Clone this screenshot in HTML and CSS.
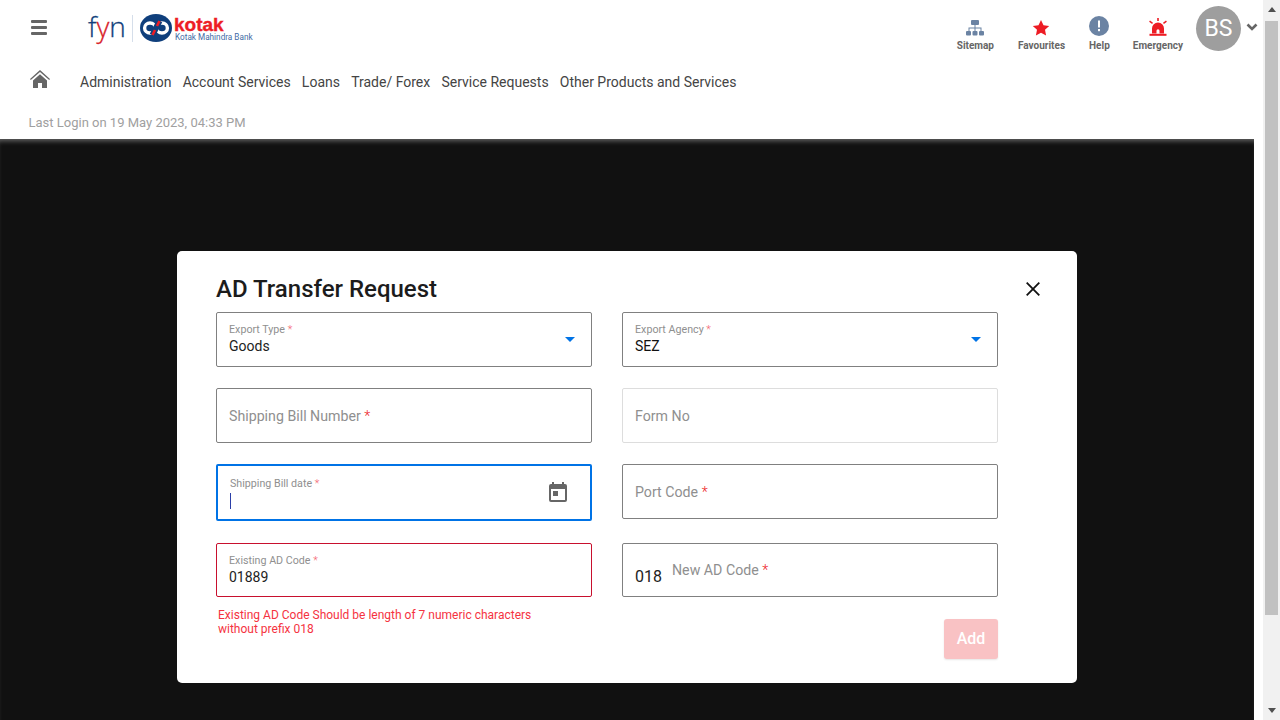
FILE: index.html
```html
<!DOCTYPE html>
<html lang="en">
<head>
  <meta charset="UTF-8" />
  <title>AD Transfer Request</title>
  <link rel="stylesheet" href="styles.css">
</head>
<body>
  <div class="page">
    <header class="topbar">
      <div class="top-row">
        <button class="menu-btn" aria-label="Menu">
          <span></span><span></span><span></span>
        </button>
        <div class="logo">
          <span class="fyn">f<span class="fyn-y">y</span>n</span>
          <span class="logo-rule"></span>
          <svg class="kotak-mark" width="32" height="28" viewBox="0 0 32 28">
            <ellipse cx="16" cy="14" rx="16" ry="14" fill="#0f3f7c"/>
            <ellipse cx="10" cy="14" rx="5.400" ry="5" fill="none" stroke="#fff" stroke-width="3.400"/>
            <ellipse cx="22" cy="14" rx="5.400" ry="5" fill="none" stroke="#fff" stroke-width="3.400"/>
            <path d="M12.500 21L19.500 7" stroke="#0f3f7c" stroke-width="6"/>
            <path d="M12.500 21L15 16M17 12L19.500 7" stroke="#ed1c24" stroke-width="2.600"/>
          </svg>
          <div class="kotak-text">
            <span class="kotak-name">kotak</span>
            <span class="kotak-sub">Kotak Mahindra Bank</span>
          </div>
        </div>
        <div class="quick-links">
          <a class="quick-link link-sitemap">
            <svg width="18" height="16" viewBox="0 0 18 16" fill="#6b83a3">
              <rect x="5" y="0" width="8" height="5" rx="1"/>
              <rect x="0" y="11" width="5" height="4.500" rx="1"/>
              <rect x="6.500" y="11" width="5" height="4.500" rx="1"/>
              <rect x="13" y="11" width="5" height="4.500" rx="1"/>
              <path d="M8.500 5h1v2.500h6v3.500h-1V8.500h-5V11h-1V8.500h-5V11h-1V7.500h6z"/>
            </svg>
            <span>Sitemap</span>
          </a>
          <a class="quick-link link-fav">
            <svg width="18" height="16" viewBox="0 0 18 16" fill="#ed1c24">
              <path d="M9 0l2.500 5.200 5.700.7-4.200 3.900 1.100 5.700L9 12.700l-5.100 2.800L5 9.800.8 5.900l5.700-.7z"/>
            </svg>
            <span>Favourites</span>
          </a>
          <a class="quick-link link-help">
            <svg width="20" height="20" viewBox="0 0 20 20">
              <circle cx="10" cy="10" r="10" fill="#6b83a3"/>
              <rect x="9" y="4.500" width="2" height="7" fill="#fff"/>
              <rect x="9" y="13" width="2" height="2.200" fill="#fff"/>
            </svg>
            <span>Help</span>
          </a>
          <a class="quick-link link-alarm">
            <svg width="18" height="18" viewBox="0 0 18 18" fill="#ed1c24">
              <path d="M3 15.500V10.500a6 6 0 0 1 12 0v5h-4.500v-2.700a1.500 1.500 0 0 0-3 0v2.700z"/>
              <rect x="0.500" y="15.800" width="17" height="2"/>
              <rect x="8.200" y="0" width="1.600" height="3"/>
              <path d="M1 2.500l3 2.200-.9 1.200-3-2.200zM17 2.500l-3 2.200.9 1.200 3-2.200z"/>
            </svg>
            <span>Emergency</span>
          </a>
        </div>
        <div class="avatar">BS</div>
        <svg class="avatar-caret" width="12" height="8" viewBox="0 0 12 8">
          <path d="M1.500 1.500L6 6l4.500-4.500" fill="none" stroke="#666" stroke-width="2.600"/>
        </svg>
      </div>
      <nav class="nav-row">
        <svg class="home-icon" width="20" height="18" viewBox="0 0 20 18" fill="#666">
          <path d="M10 0L0 9l.8 1L10 2l9.200 8 .8-1z"/>
          <path d="M3 10.500L10 4.300l7 6.200V18h-5v-5H8v5H3z"/>
        </svg>
        <ul class="nav-list">
          <li>Administration</li>
          <li>Account Services</li>
          <li>Loans</li>
          <li>Trade/ Forex</li>
          <li>Service Requests</li>
          <li>Other Products and Services</li>
        </ul>
      </nav>
      <p class="last-login">Last Login on 19 May 2023, 04:33 PM</p>
    </header>

    <div class="overlay">
      <section class="modal">
        <div class="modal-head">
          <h2>AD Transfer Request</h2>
          <svg class="close-icon" width="14" height="14" viewBox="0 0 14 14">
            <path d="M.700.700l12.600 12.600M13.300.700L.700 13.300" stroke="#111" stroke-width="1.800" fill="none"/>
          </svg>
        </div>
        <form class="form-grid">
          <div class="field field-select">
            <label class="small-label">Export Type <em>*</em></label>
            <div class="value">Goods</div>
            <span class="select-arrow"></span>
          </div>
          <div class="field field-select">
            <label class="small-label">Export Agency <em>*</em></label>
            <div class="value value-dark">SEZ</div>
            <span class="select-arrow"></span>
          </div>

          <div class="field">
            <label class="big-label">Shipping Bill Number <em>*</em></label>
          </div>
          <div class="field field-disabled">
            <label class="big-label">Form No</label>
          </div>

          <div class="field field-focus">
            <label class="small-label">Shipping Bill date <em>*</em></label>
            <span class="caret"></span>
            <svg class="date-icon" width="18" height="20" viewBox="0 0 18 20" fill="#666">
              <path d="M3 0h2v2h8V0h2v2h1a2 2 0 0 1 2 2v14a2 2 0 0 1-2 2H2a2 2 0 0 1-2-2V4a2 2 0 0 1 2-2h1zM2 7v11h14V7z"/>
              <rect x="4" y="9" width="5" height="5"/>
            </svg>
          </div>
          <div class="field">
            <label class="big-label">Port Code <em>*</em></label>
          </div>

          <div class="code-cell">
            <div class="field field-error">
              <label class="small-label">Existing AD Code <em>*</em></label>
              <div class="value">01889</div>
            </div>
            <p class="error-text">Existing AD Code Should be length of 7 numeric characters<br>without prefix 018</p>
          </div>
          <div class="code-cell new-code-cell">
            <div class="field field-prefix">
              <span class="prefix">018</span>
              <label class="big-label">New AD Code <em>*</em></label>
            </div>
            <button type="button" class="add-btn">Add</button>
          </div>
        </form>
      </section>
    </div>
  </div>

  <div class="scrollbar">
    <span class="scroll-up"></span>
    <span class="scroll-thumb"></span>
    <span class="scroll-down"></span>
  </div>
</body>
</html>
```

FILE: styles.css
```css
:root {
  --border: #808080;
  --label: #8f8f8f;
  --red: #ed1c24;
  --blue: #0073e6;
  --text: #222;
}

body {
  margin: 0;
  display: flex;
  height: 720px;
  overflow: hidden;
  background: #fff;
  color: var(--text);
  font-family: Roboto, "Liberation Sans", sans-serif;
}

.page {
  flex: 1;
  min-width: 0;
  display: flex;
  flex-direction: column;
}

/* header */
.topbar {
  height: 139px;
  flex: none;
}

.top-row {
  display: flex;
  align-items: flex-start;
  height: 60px;
}

.menu-btn {
  display: flex;
  flex-direction: column;
  gap: 3px;
  width: 16px;
  margin: 20px 0 0 31px;
  padding: 0;
  border: 0;
  background: none;
}

.menu-btn span {
  display: block;
  height: 3px;
  border-radius: 1px;
  background: #666;
}

.logo {
  display: flex;
  align-items: center;
  margin: 13px 0 0 41px;
  height: 30px;
}

.fyn {
  width: 43px;
  margin-top: -4px;
  font-family: "Open Sans", sans-serif;
  font-size: 28px;
  font-weight: 300;
  line-height: 30px;
  color: #123f7c;
  -webkit-text-stroke: 0.3px #123f7c;
}

.fyn-y {
  color: #d8232a;
  -webkit-text-stroke: 0.3px #d8232a;
}

.logo-rule {
  width: 1px;
  height: 27px;
  margin-left: 1px;
  background: #d5deea;
}

.kotak-mark {
  margin-left: 7px;
}

.kotak-text {
  display: flex;
  flex-direction: column;
  margin: 3px 0 0 2px;
}

.kotak-name {
  font-family: "Liberation Sans", sans-serif;
  font-weight: 700;
  font-size: 19px;
  line-height: 15px;
  color: var(--red);
  -webkit-text-stroke: 0.4px var(--red);
}

.kotak-sub {
  margin-left: 1px;
  font-size: 8.200px;
  line-height: 10px;
  color: #3f6ba5;
}

.quick-links {
  display: flex;
  margin-left: auto;
}

.quick-link {
  display: flex;
  flex-direction: column;
  align-items: center;
  justify-content: flex-end;
  height: 52px;
  font-size: 10px;
  font-weight: 700;
  line-height: 12px;
  color: #666;
}

.quick-link svg {
  margin-bottom: 4px;
}

.link-sitemap { margin-right: 24px; }
.link-fav { margin-right: 24px; }
.link-help { margin-right: 23px; }
.link-alarm { margin-right: 13px; }

.avatar {
  width: 45px;
  height: 45px;
  margin-top: 6px;
  border-radius: 50%;
  background: #9e9e9e;
  color: #fff;
  font-size: 23px;
  line-height: 45px;
  text-align: center;
}

.avatar-caret {
  margin: 23px 5px 0 5px;
}

.nav-row {
  display: flex;
  align-items: center;
  height: 36px;
  margin-top: 4px;
}

.home-icon {
  margin: -6px 0 0 30px;
}

.nav-list {
  display: flex;
  gap: 11.200px;
  margin: 0 0 0 30px;
  padding: 0;
  list-style: none;
  font-size: 14px;
  color: #444;
}

.last-login {
  margin: 15px 0 0 28.500px;
  font-size: 13px;
  line-height: 16px;
  color: #a0a0a0;
}

/* modal */
.overlay {
  flex: 1;
  display: flex;
  justify-content: center;
  align-items: flex-start;
  padding-top: 112px;
  margin-right: 9px;
  background: #111;
  box-shadow: inset 0 5px 5px -3px #666;
}

.modal {
  box-sizing: border-box;
  width: 900px;
  height: 432px;
  padding: 0 37px 0 39px;
  border-radius: 5px;
  background: #fff;
}

.modal-head {
  display: flex;
  align-items: center;
  justify-content: space-between;
  box-sizing: border-box;
  height: 61px;
  padding-top: 15px;
}

.modal-head h2 {
  margin: 0;
  font-size: 24px;
  font-weight: 500;
  line-height: 46px;
  color: #1c1c1c;
}

.close-icon {
  flex: none;
}

.form-grid {
  display: grid;
  grid-template-columns: 376px 376px;
  grid-template-rows: 55px 55px 57px auto;
  column-gap: 30px;
  row-gap: 21px;
}

.field {
  position: relative;
  box-sizing: border-box;
  height: 55px;
  padding: 0 12px;
  border: 1px solid var(--border);
  border-radius: 2px;
  background: #fff;
}

.small-label {
  display: block;
  padding-top: 10px;
  font-size: 10.700px;
  line-height: 13px;
  color: var(--label);
}

.small-label em {
  color: #f4606a;
}

.big-label {
  font-size: 14.200px;
  line-height: 55px;
  color: var(--label);
}

em {
  font-style: normal;
  font-weight: 300;
  color: var(--red);
}

.value {
  font-size: 14px;
  line-height: 20px;
  color: var(--text);
}

.value-dark {
  color: #111;
}

.select-arrow {
  position: absolute;
  top: 24px;
  right: 16px;
  border-left: 5px solid transparent;
  border-right: 5px solid transparent;
  border-top: 5px solid var(--blue);
}

.field-disabled {
  border-color: #ddd;
}

.field-focus {
  height: 57px;
  border: 2px solid var(--blue);
}

.field-focus .small-label {
  padding-top: 11px;
}

.caret {
  display: block;
  width: 1px;
  height: 16px;
  margin-top: 3px;
  background: #2b3fa8;
}

.date-icon {
  position: absolute;
  top: 16px;
  right: 23px;
}

.code-cell {
  margin-top: 1px;
}

.field-error {
  height: 54px;
  border-color: #c8102e;
}

.error-text {
  margin: 11px 0 0 2px;
  font-size: 12px;
  line-height: 14px;
  color: #f5333f;
}

.field-prefix {
  display: flex;
  height: 54px;
}

.prefix {
  margin-right: 10px;
  font-size: 16px;
  line-height: 66px;
  color: var(--text);
}

.field-prefix .big-label {
  line-height: 52px;
}

.new-code-cell {
  display: flex;
  flex-direction: column;
  align-items: flex-end;
}

.new-code-cell .field {
  align-self: stretch;
}

.add-btn {
  width: 54px;
  height: 40px;
  margin-top: 22px;
  padding: 0 0 2px;
  border: 0;
  border-radius: 3px;
  background: #f9c2c4;
  color: #fff;
  font-family: inherit;
  font-size: 16px;
  font-weight: 500;
  box-shadow: 0 1px 2px rgba(0, 0, 0, 0.1);
}

/* fake browser scrollbar */
.scrollbar {
  display: flex;
  flex-direction: column;
  align-items: center;
  flex: none;
  width: 17px;
  background: #f1f1f1;
}

.scroll-up {
  margin-top: 7px;
  border-left: 4px solid transparent;
  border-right: 4px solid transparent;
  border-bottom: 5px solid #505050;
}

.scroll-thumb {
  width: 13px;
  height: 594px;
  margin-top: 9px;
  background: #c1c1c1;
}

.scroll-down {
  margin-top: auto;
  margin-bottom: 7px;
  border-left: 4px solid transparent;
  border-right: 4px solid transparent;
  border-top: 5px solid #505050;
}
```
